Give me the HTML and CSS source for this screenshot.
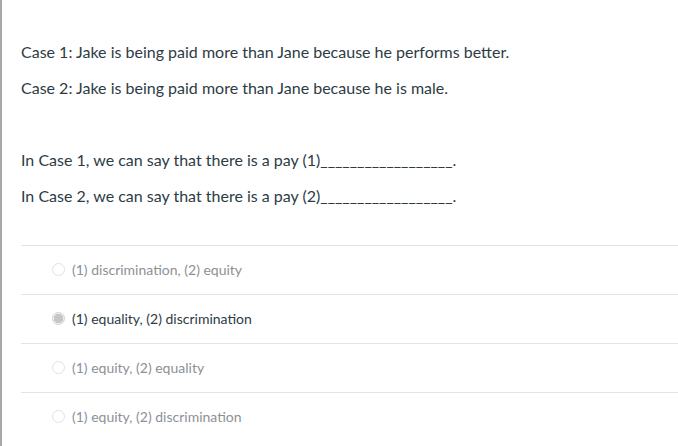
FILE: index.html
```html
<!DOCTYPE html>
<html>
<head>
<meta charset="utf-8">
<link rel="stylesheet" href="styles.css">
</head>
<body>
<div class="question">
  <div class="text">
    <p>Case 1: Jake is being paid more than Jane because he performs better.</p>
    <p>Case 2: Jake is being paid more than Jane because he is male.</p>
    <p class="gap">In Case 1, we can say that there is a pay (1)__________________.</p>
    <p>In Case 2, we can say that there is a pay (2)__________________.</p>
  </div>
  <div class="answers">
    <div class="answer"><span class="radio"></span><span class="label">(1) discrimination, (2) equity</span></div>
    <div class="answer selected"><span class="radio"></span><span class="label">(1) equality, (2) discrimination</span></div>
    <div class="answer"><span class="radio"></span><span class="label">(1) equity, (2) equality</span></div>
    <div class="answer"><span class="radio"></span><span class="label">(1) equity, (2) discrimination</span></div>
  </div>
</div>
</body>
</html>
```
FILE: styles.css
```css
html, body {
  margin: 0;
  padding: 0;
  background: #fff;
}
body {
  font-family: Lato, "Noto Sans", sans-serif;
  color: #2d3b45;
}
.question {
  border-left: 2px solid #a8a8a8;
  min-height: 446px;
  box-sizing: border-box;
  padding-left: 19px;
  padding-top: 28px;
}
.text p {
  margin: 12px 0;
  font-size: 16px;
  line-height: 24px;
}
.text p.gap {
  margin-top: 48px;
}
.answers {
  margin-top: 37px;
}
.answer {
  border-top: 1px solid #e3e3e3;
  box-sizing: border-box;
  height: 49px;
  padding-bottom: 2px;
  display: flex;
  align-items: center;
  padding-left: 31px;
  font-size: 14px;
  color: #8b9196;
}
.answer.selected {
  color: #2d3b45;
}
.radio {
  width: 11px;
  height: 11px;
  border: 1px solid #e2e2e2;
  border-radius: 50%;
  margin-right: 7px;
  box-sizing: content-box;
  background: #fff;
  flex: none;
}
.answer.selected .radio {
  border-color: #d0d0d0;
  background: radial-gradient(circle, #c6c6c6 0 4.5px, #f4f4f4 5px);
}
```
